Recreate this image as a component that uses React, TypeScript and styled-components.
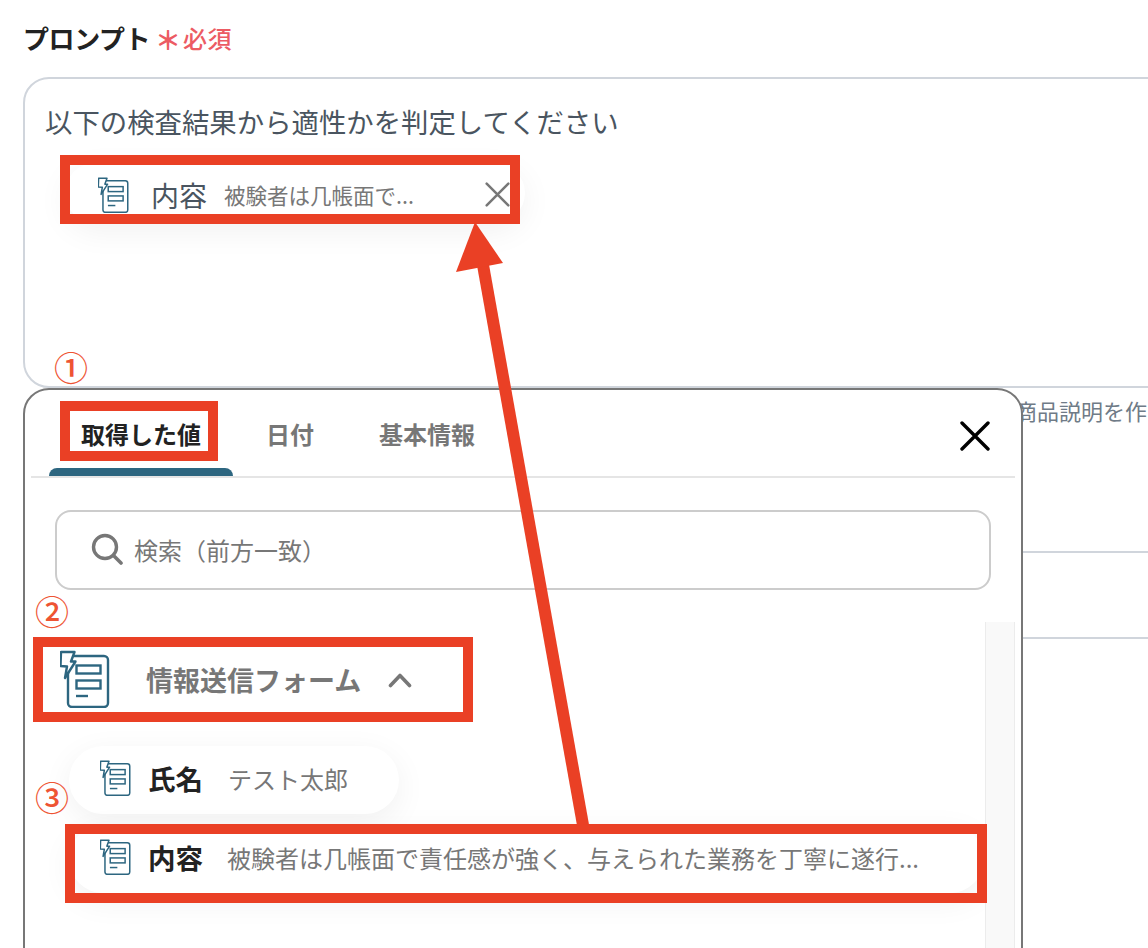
import React from 'react';
import styled, { createGlobalStyle } from 'styled-components';

const GlobalStyle = createGlobalStyle`
  html, body {
    margin: 0;
    padding: 0;
    background: #fff;
  }
  body {
    font-family: "Noto Sans CJK JP", "Noto Sans", sans-serif;
  }
`;

const Page = styled.div`
  position: relative;
  width: 1148px;
  height: 948px;
  overflow: hidden;
  background: #fff;
  padding: 22px 0 0 23px;
  box-sizing: border-box;
`;

const LabelRow = styled.div`
  display: flex;
  align-items: center;
  height: 32px;
  margin-bottom: 23px;
`;

const LabelText = styled.span`
  width: 130px;
  font-size: 26px;
  font-weight: 700;
  letter-spacing: -0.4px;
  color: #222;
  line-height: 32px;
  white-space: nowrap;
`;

const RequiredMark = styled.span`
  width: 26px;
  margin-left: 2px;
  padding-top: 2px;
  font-size: 26px;
  line-height: 30px;
  font-weight: 700;
  color: #ec5b63;
`;

const RequiredText = styled.span`
  margin-left: 2px;
  font-size: 24px;
  line-height: 32px;
  font-weight: 500;
  letter-spacing: 0.5px;
  color: #ec5b63;
`;

const PromptBox = styled.div`
  width: 1200px;
  height: 311px;
  box-sizing: border-box;
  border: 2px solid #d0d5dc;
  border-radius: 26px;
  padding: 24px 20px;
`;

const PromptText = styled.div`
  font-size: 27.4px;
  line-height: 36px;
  color: #4a5560;
`;

const TagChip = styled.div<{
  $width: number;
  $height?: number;
  $top?: number;
  $left?: number;
  $lower?: boolean;
}>`
  display: flex;
  align-items: center;
  flex: none;
  width: ${(p) => p.$width}px;
  height: ${(p) => p.$height ?? 68}px;
  margin-top: ${(p) => p.$top ?? 0}px;
  margin-left: ${(p) => p.$left ?? 0}px;
  padding: ${(p) => (p.$lower ? '3px 0 0 33px' : '0 0 4px 31px')};
  box-sizing: border-box;
  background: #fff;
  border-radius: 34px;
  box-shadow: 0 8px 32px rgba(0, 0, 0, 0.06);
`;

const ChipName = styled.span<{ $bold?: boolean }>`
  margin-left: ${(p) => (p.$bold ? 17 : 22)}px;
  font-size: ${(p) => (p.$bold ? 27.5 : 28)}px;
  font-weight: ${(p) => (p.$bold ? 700 : 400)};
  color: ${(p) => (p.$bold ? '#222' : '#4a5560')};
  white-space: nowrap;
`;

const ChipValue = styled.span<{ $size: number; $gap: number }>`
  margin-left: ${(p) => p.$gap}px;
  font-size: ${(p) => p.$size}px;
  color: #777;
  white-space: nowrap;
`;

const ChipClose = styled.span`
  display: flex;
  margin-left: auto;
  margin-right: 15px;
`;

const HintText = styled.div`
  padding: 7px 0 0 992px;
  height: 163px;
  box-sizing: border-box;
  font-size: 22px;
  line-height: 30px;
  color: #6f7b87;
  white-space: nowrap;
`;

const FormRow = styled.div<{ $height: number }>`
  width: 1200px;
  height: ${(p) => p.$height}px;
  border-top: 2px solid #d0d5dc;
  box-sizing: border-box;
`;

const Panel = styled.div`
  position: absolute;
  left: 23px;
  top: 388px;
  width: 1000px;
  height: 620px;
  box-sizing: border-box;
  background: #fff;
  border: 2px solid #777;
  border-radius: 26px;
`;

const TabBar = styled.div`
  display: flex;
  align-items: center;
  height: 88px;
  margin: 0 6px;
  padding-left: 18px;
  padding-right: 25px;
  box-sizing: border-box;
  border-bottom: 2px solid #e5e5e5;
`;

const Tab = styled.div<{ $active?: boolean }>`
  position: relative;
  display: flex;
  align-items: center;
  height: 86px;
  margin-right: 1px;
  padding: 0 32px;
  box-sizing: border-box;
  font-size: 24px;
  font-weight: 700;
  color: ${(p) => (p.$active ? '#222' : '#777')};

  ${(p) =>
    p.$active &&
    `
    &::after {
      content: '';
      position: absolute;
      left: 0;
      right: 0;
      bottom: 0;
      height: 8px;
      background: #2d6680;
      border-radius: 8px 8px 0 0;
    }
  `}
`;

const PanelClose = styled.span`
  display: flex;
  margin-left: auto;
  margin-top: 5px;
`;

const SearchBox = styled.div`
  display: flex;
  align-items: center;
  width: 936px;
  height: 80px;
  margin: 32px 0 0 30px;
  padding: 0 0 2px 34px;
  box-sizing: border-box;
  border: 2px solid #ccc;
  border-radius: 16px;
  font-size: 24px;
  color: #777;
  gap: 11px;
`;

const ListArea = styled.div`
  display: flex;
  margin: 32px 6px 0 0;
  height: 400px;
`;

const ListContent = styled.div`
  display: flex;
  flex-direction: column;
  flex: 1;
  padding-top: 28px;
`;

const ScrollTrack = styled.div`
  flex: none;
  width: 30px;
  box-sizing: border-box;
  background: #f9f9f9;
  border-left: 1px solid #ececec;
  border-right: 1px solid #ececec;
`;

const GroupHeader = styled.div`
  display: flex;
  align-items: center;
  height: 58px;
  margin-left: 35px;
  margin-bottom: 38px;
`;

const GroupTitle = styled.span`
  margin-left: 36px;
  font-size: 27px;
  font-weight: 700;
  color: #777;
  white-space: nowrap;
`;

const Chevron = styled.span`
  display: flex;
  margin: 2px 0 0 27px;
`;

const Highlight = styled.div<{ $x: number; $y: number; $w: number; $h: number }>`
  position: absolute;
  left: ${(p) => p.$x}px;
  top: ${(p) => p.$y}px;
  width: ${(p) => p.$w}px;
  height: ${(p) => p.$h}px;
  box-sizing: border-box;
  border: 10px solid #ea4025;
`;

const StepNumber = styled.span<{ $x: number; $y: number }>`
  position: absolute;
  left: ${(p) => p.$x}px;
  top: ${(p) => p.$y}px;
  font-size: 34px;
  font-weight: 500;
  line-height: 34px;
  color: #ee5433;
`;

const ArrowLayer = styled.svg`
  position: absolute;
  left: 0;
  top: 0;
`;

const FormIcon = ({ width, height }: { width: number; height: number }) => (
  <svg width={width} height={height} viewBox="0 0 50 58" fill="none" style={{ flex: 'none' }}>
    <rect x="8" y="6" width="40" height="51" rx="4" stroke="#2d6680" strokeWidth="2.4" />
    <path
      d="M1 2h13.5l-3.5 9.5h4.5L5 28l2-11.5L0.5 16z"
      fill="#fff"
      stroke="#2d6680"
      strokeWidth="2.4"
      strokeLinejoin="round"
    />
    <rect x="16.5" y="15.5" width="24" height="8" stroke="#2d6680" strokeWidth="2.4" />
    <rect x="16.5" y="30.5" width="24" height="8" stroke="#2d6680" strokeWidth="2.4" />
    <path d="M16 46h12" stroke="#2d6680" strokeWidth="2.4" />
  </svg>
);

const CrossIcon = ({ size, color, weight }: { size: number; color: string; weight: number }) => (
  <svg width={size} height={size} viewBox="0 0 30 30" fill="none">
    <path d="M2 2l26 26M28 2L2 28" stroke={color} strokeWidth={weight} strokeLinecap="round" />
  </svg>
);

export default function App() {
  return (
    <Page>
      <GlobalStyle />
      <LabelRow>
        <LabelText>プロンプト</LabelText>
        <RequiredMark>＊</RequiredMark>
        <RequiredText>必須</RequiredText>
      </LabelRow>

      <PromptBox>
        <PromptText>以下の検査結果から適性かを判定してください</PromptText>
        <TagChip $width={460} $height={60} $left={20} $top={24} $lower>
          <FormIcon width={31} height={36} />
          <ChipName>内容</ChipName>
          <ChipValue $size={21.5} $gap={17}>被験者は几帳面で...</ChipValue>
          <ChipClose>
            <CrossIcon size={25} color="#777" weight={3} />
          </ChipClose>
        </TagChip>
      </PromptBox>

      <HintText>商品説明を作</HintText>
      <FormRow $height={86} />
      <FormRow $height={320} />

      <Panel>
        <TabBar>
          <Tab $active>取得した値</Tab>
          <Tab>日付</Tab>
          <Tab>基本情報</Tab>
          <PanelClose>
            <CrossIcon size={30} color="#000" weight={3.4} />
          </PanelClose>
        </TabBar>

        <SearchBox>
          <svg width="32" height="32" viewBox="0 0 32 32" fill="none" style={{ flex: 'none' }}>
            <circle cx="14" cy="14" r="11.5" stroke="#777" strokeWidth="3.4" />
            <path d="M22.5 22.5L30 30" stroke="#777" strokeWidth="3.6" strokeLinecap="round" />
          </svg>
          検索（前方一致）
        </SearchBox>

        <ListArea>
          <ListContent>
            <GroupHeader>
              <FormIcon width={50} height={58} />
              <GroupTitle>情報送信フォーム</GroupTitle>
              <Chevron>
                <svg width="24" height="16" viewBox="0 0 24 16" fill="none">
                  <path d="M2.5 13.5L12 3.5l9.5 10" stroke="#777" strokeWidth="3.6" strokeLinecap="round" strokeLinejoin="round" />
                </svg>
              </Chevron>
            </GroupHeader>
            <TagChip $width={330} $left={44}>
              <FormIcon width={31} height={36} />
              <ChipName $bold>氏名</ChipName>
              <ChipValue $size={24} $gap={25}>テスト太郎</ChipValue>
            </TagChip>
            <TagChip $width={915} $left={44} $top={11}>
              <FormIcon width={31} height={36} />
              <ChipName $bold>内容</ChipName>
              <ChipValue $size={24} $gap={24}>被験者は几帳面で責任感が強く、与えられた業務を丁寧に遂行...</ChipValue>
            </TagChip>
          </ListContent>
          <ScrollTrack />
        </ListArea>
      </Panel>

      <Highlight $x={60} $y={155} $w={460} $h={69} />
      <Highlight $x={60} $y={401} $w={158} $h={60} />
      <Highlight $x={33} $y={637} $w={440} $h={85} />
      <Highlight $x={65} $y={824} $w={922} $h={79} />

      <StepNumber $x={54} $y={350}>①</StepNumber>
      <StepNumber $x={35} $y={594}>②</StepNumber>
      <StepNumber $x={35} $y={780}>③</StepNumber>

      <ArrowLayer width="1148" height="948" viewBox="0 0 1148 948">
        <path d="M583 825L483 265" stroke="#ea4025" strokeWidth="12" />
        <path d="M475 222L456 272L503 263z" fill="#ea4025" />
      </ArrowLayer>
    </Page>
  );
}
